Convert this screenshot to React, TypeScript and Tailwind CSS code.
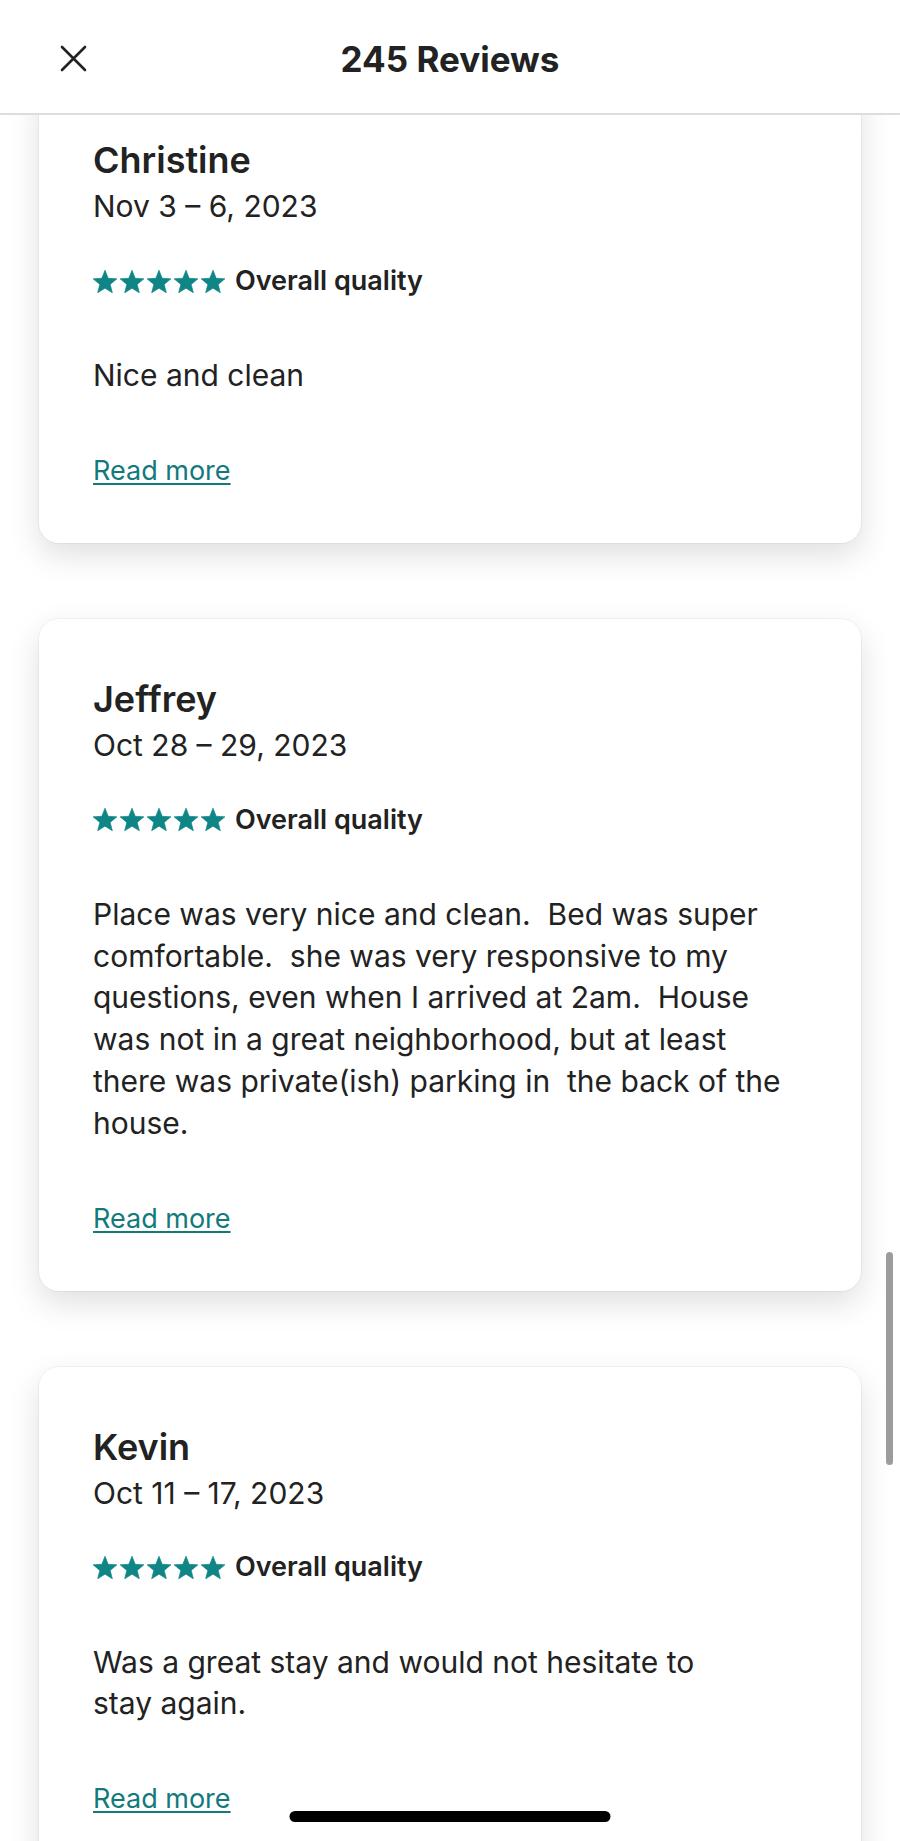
type Review = {
  name: string
  dates: string
  text: string
}

const REVIEWS: Review[] = [
  { name: 'Christine', dates: 'Nov 3 – 6, 2023', text: 'Nice and clean' },
  {
    name: 'Jeffrey',
    dates: 'Oct 28 – 29, 2023',
    text: 'Place was very nice and clean.  Bed was super comfortable.  she was very responsive to my questions, even when I arrived at 2am.  House was not in a great neighborhood, but at least there was private(ish) parking in  the back of the house.',
  },
  { name: 'Kevin', dates: 'Oct 11 – 17, 2023', text: 'Was a great stay and would not hesitate to\nstay again.' },
]

function Star() {
  return (
    <svg width="24" height="23" viewBox="1 1.1 22 20.8" className="shrink-0">
      <path
        d="M12 1.1 L14.94 8.56 L22.94 9.05 L16.76 14.15 L18.76 21.9 L12 17.6 L5.24 21.9 L7.24 14.15 L1.06 9.05 L9.06 8.56 Z"
        fill="#0f8585"
        stroke="#0f8585"
        strokeWidth="0.6"
        strokeLinejoin="round"
      />
    </svg>
  )
}

function CloseIcon() {
  return (
    <svg width="27" height="27" viewBox="0 0 27 27" fill="none" stroke="#222222" strokeWidth="2.6" strokeLinecap="round">
      <path d="M2 2 L25 25 M25 2 L2 25" />
    </svg>
  )
}

function ReviewCard({ review }: { review: Review }) {
  return (
    <div className="rounded-[20px] bg-white px-[54px] pt-[58px] pb-[54px] shadow-[0_12px_32px_rgba(0,0,0,0.13)] ring-1 ring-black/[0.04]">
      <h3 className="text-[36px] leading-[44px] font-semibold">{review.name}</h3>
      <p className="mt-[4px] text-[30px] leading-[40px]">{review.dates}</p>

      {/* Rating */}
      <div className="mt-[37px] flex h-[36px] items-center">
        <div className="flex items-center gap-[3px]">
          <Star />
          <Star />
          <Star />
          <Star />
          <Star />
        </div>
        <span className="ml-[10px] text-[27px] font-semibold">Overall quality</span>
      </div>

      <p className="mt-[56px] whitespace-pre-wrap text-[30px] leading-[41.8px]">{review.text}</p>

      <a
        href="#"
        className="mt-[56px] block w-fit text-[27px] leading-[36px] text-[#137a7b] underline decoration-[1.5px] underline-offset-[3px]"
      >
        Read more
      </a>
    </div>
  )
}

export default function App() {
  return (
    <div className="relative h-[1841px] overflow-hidden bg-white font-['Inter',sans-serif] text-[#222222]">
      {/* Header */}
      <header className="relative z-10 grid h-[115px] grid-cols-[1fr_auto_1fr] items-center border-b-2 border-[#dddddd] bg-white pt-[4px]">
        <div className="pl-[60px]">
          <CloseIcon />
        </div>
        <h1 className="text-[35px] leading-[44px] font-bold">245 Reviews</h1>
        <div />
      </header>

      {/* Review list */}
      <main className="-mt-[35px] flex flex-col gap-[76px] px-[39px]">
        {REVIEWS.map(review => (
          <ReviewCard key={review.name} review={review} />
        ))}
      </main>

      {/* Scroll indicator */}
      <div className="absolute top-[1252px] right-[7px] h-[213px] w-[7px] rounded-full bg-[#9c9c9c]" />

      {/* Home indicator */}
      <div className="absolute bottom-[19px] left-1/2 h-[11px] w-[321px] -translate-x-1/2 rounded-full bg-black" />
    </div>
  )
}
